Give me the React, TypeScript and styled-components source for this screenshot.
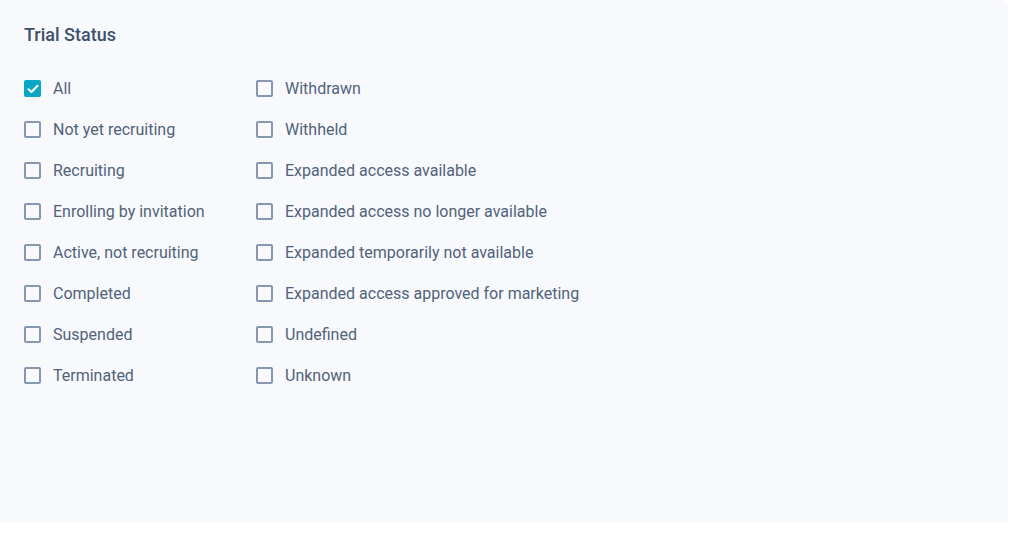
import React from "react";
import styled, { createGlobalStyle } from "styled-components";

const Global = createGlobalStyle`
  html, body { margin: 0; padding: 0; background: #ffffff; }
  body { font-family: Roboto, "Liberation Sans", Arial, sans-serif; }
`;

const Panel = styled.section`
  width: 1008px;
  height: 522px;
  box-sizing: border-box;
  background: #f7f9fc;
  border-radius: 0 8px 0 0;
  padding: 24px 24px;
`;

const Title = styled.h2`
  margin: 0;
  font-size: 18px;
  font-weight: 500;
  line-height: 22px;
  color: #3e506b;
`;

const Grid = styled.div`
  display: grid;
  grid-template-columns: 232px auto;
  grid-auto-flow: column;
  grid-template-rows: repeat(8, 41px);
  margin-top: 22px;
`;

const Item = styled.label`
  display: flex;
  align-items: center;
  gap: 12px;
  height: 41px;
  font-size: 16px;
  color: #52627a;
  cursor: pointer;
`;

const Box = styled.span<{ $checked?: boolean }>`
  width: 17px;
  height: 17px;
  box-sizing: border-box;
  border-radius: 2px;
  border: ${(p) => (p.$checked ? "none" : "2px solid #8797ad")};
  background: ${(p) => (p.$checked ? "#0aa6c6" : "transparent")};
  display: flex;
  align-items: center;
  justify-content: center;
  flex-shrink: 0;
`;

const col1 = [
  "All",
  "Not yet recruiting",
  "Recruiting",
  "Enrolling by invitation",
  "Active, not recruiting",
  "Completed",
  "Suspended",
  "Terminated",
];
const col2 = [
  "Withdrawn",
  "Withheld",
  "Expanded access available",
  "Expanded access no longer available",
  "Expanded temporarily not available",
  "Expanded access approved for marketing",
  "Undefined",
  "Unknown",
];

export default function App() {
  const items = [...col1, ...col2];
  return (
    <>
      <Global />
      <Panel>
        <Title>Trial Status</Title>
        <Grid>
          {items.map((label) => {
            const checked = label === "All";
            return (
              <Item key={label}>
                <Box $checked={checked}>
                  {checked && (
                    <svg width="12" height="10" viewBox="0 0 12 10">
                      <path d="M1.5 5.2 L4.5 8 L10.5 1.8" stroke="#fff" strokeWidth="2" fill="none" strokeLinecap="round" strokeLinejoin="round" />
                    </svg>
                  )}
                </Box>
                {label}
              </Item>
            );
          })}
        </Grid>
      </Panel>
    </>
  );
}
